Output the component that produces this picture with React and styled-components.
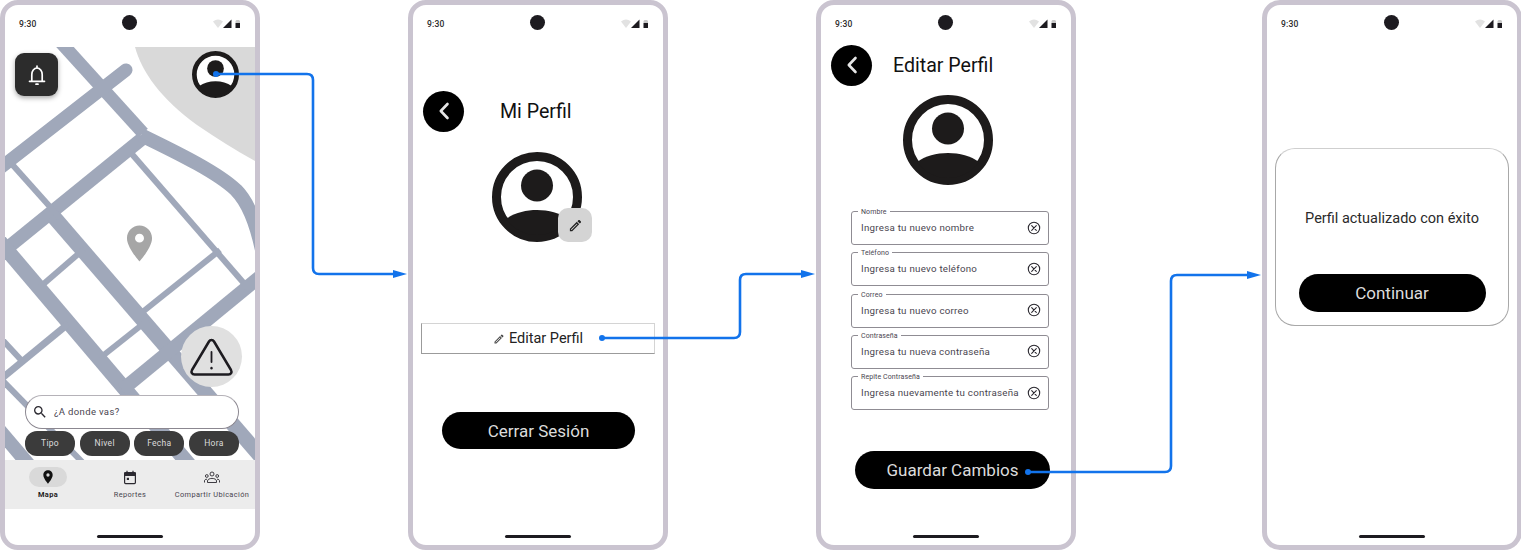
import React from 'react';
import styled, { createGlobalStyle } from 'styled-components';

const GlobalStyle = createGlobalStyle`
  html, body {
    margin: 0;
    padding: 0;
    background: #fff;
    font-family: Roboto, "Liberation Sans", sans-serif;
  }
`;

const Canvas = styled.div`
  position: relative;
  display: flex;
  width: 1521px;
  height: 550px;
  overflow: hidden;
  background: #fff;
`;

const Phone = styled.div`
  box-sizing: border-box;
  display: flex;
  flex-direction: column;
  flex: none;
  width: 260px;
  height: 550px;
  margin-left: ${(p) => p.$gap || 0}px;
  border: 5px solid #cac4d0;
  border-radius: 18px;
  overflow: hidden;
  background: #fff;
`;

const StatusBar = styled.div`
  position: relative;
  display: flex;
  flex: none;
  align-items: center;
  justify-content: space-between;
  height: 36px;
  padding: 2px 14px 0;
  box-sizing: border-box;
  font-size: 8.5px;
  font-weight: 500;
  letter-spacing: 0.2px;
  color: #2a2a2a;
`;

const Camera = styled.div`
  position: absolute;
  left: 117px;
  top: 10px;
  width: 15px;
  height: 15px;
  border-radius: 50%;
  background: #1d1b20;
`;

const HomeBar = styled.div`
  flex: none;
  width: 66px;
  height: 3px;
  margin: auto auto 7px;
  border-radius: 2px;
  background: #1d1b20;
`;

/* map screen */
const MapArea = styled.div`
  position: relative;
  flex: none;
  height: 413px;
  margin-top: 6px;
  overflow: hidden;
`;

const MapDrawing = styled.svg`
  display: block;
  width: 250px;
  height: 413px;
`;

const BellButton = styled.div`
  position: absolute;
  left: 10px;
  top: 6px;
  display: flex;
  align-items: center;
  justify-content: center;
  width: 43px;
  height: 43px;
  border-radius: 9px;
  background: #2c2c2c;
  box-shadow: 0 2px 5px rgba(0, 0, 0, 0.35);
`;

const MapAvatar = styled.div`
  position: absolute;
  left: 187px;
  top: 4px;
  line-height: 0;
`;

const AlertButton = styled.div`
  position: absolute;
  left: 176px;
  top: 279px;
  display: flex;
  align-items: center;
  justify-content: center;
  width: 61px;
  height: 61px;
  border-radius: 50%;
  background: #e0e0e0;
`;

const MapControls = styled.div`
  position: absolute;
  left: 20px;
  top: 348px;
  display: flex;
  flex-direction: column;
  gap: 2.5px;
  width: 214px;
`;

const SearchBar = styled.div`
  box-sizing: border-box;
  display: flex;
  align-items: center;
  gap: 6px;
  height: 33.5px;
  padding-left: 6px;
  border: 1px solid #8b8790;
  border-top-color: #b5b2b8;
  border-radius: 17px;
  background: #fff;
  font-size: 9.5px;
  letter-spacing: 0.35px;
  color: #49454f;
`;

const ChipRow = styled.div`
  display: flex;
  justify-content: space-between;
`;

const Chip = styled.div`
  display: flex;
  align-items: center;
  justify-content: center;
  width: 50px;
  height: 24.5px;
  border-radius: 12px;
  background: #3b3b3b;
  font-size: 8.5px;
  letter-spacing: 0.3px;
  color: #dcdcdc;
`;

const NavBar = styled.div`
  display: grid;
  flex: none;
  grid-template-columns: repeat(3, 82px);
  justify-content: center;
  height: 49px;
  background: #ececec;
`;

const NavItem = styled.div`
  display: flex;
  flex-direction: column;
  align-items: center;
  padding-top: 7px;
  font-size: 7.4px;
  font-weight: ${(p) => (p.$active ? 700 : 400)};
  letter-spacing: 0.36px;
  white-space: nowrap;
  color: ${(p) => (p.$active ? '#1d1b20' : '#49454f')};
`;

const NavIcon = styled.div`
  display: flex;
  align-items: center;
  justify-content: center;
  width: 38.5px;
  height: 20px;
  margin-bottom: 3px;
  border-radius: 10px;
  background: ${(p) => (p.$active ? '#d9d9d9' : 'transparent')};
`;

/* profile screens */
const Header = styled.div`
  display: flex;
  flex: none;
  align-items: center;
  gap: ${(p) => p.$gap}px;
  margin: ${(p) => p.$top}px 0 0 10px;
`;

const HeaderTitle = styled.span`
  padding-top: 2px;
  font-size: 19.6px;
  line-height: 40px;
  color: #111;
`;

const BackButton = styled.div`
  display: flex;
  align-items: center;
  justify-content: center;
  width: 41px;
  height: 41px;
  border-radius: 50%;
  background: #000;
`;

const AvatarWrap = styled.div`
  position: relative;
  flex: none;
  width: 90px;
  height: 90px;
  margin: ${(p) => p.$top}px 0 0 ${(p) => p.$left}px;
`;

const EditBadge = styled.div`
  position: absolute;
  left: 66px;
  top: 56px;
  display: flex;
  align-items: center;
  justify-content: center;
  width: 34px;
  height: 34px;
  border-radius: 10px;
  background: #d4d4d4;
`;

const EditRow = styled.div`
  box-sizing: border-box;
  display: flex;
  flex: none;
  align-items: center;
  justify-content: center;
  gap: 4px;
  width: 234px;
  height: 31px;
  margin: 81px 0 0 8px;
  border: 1px solid #9b9b9b;
  border-top-color: #d4d4d4;
  border-right-color: #d4d4d4;
  font-size: 14.5px;
  color: #222;
`;

const PillButton = styled.div`
  display: flex;
  flex: none;
  align-items: center;
  justify-content: center;
  width: ${(p) => p.$width}px;
  height: ${(p) => p.$height}px;
  margin: ${(p) => p.$margin};
  border-radius: 19px;
  background: #000;
  font-size: 17px;
  color: #dcdcdc;
`;

const FieldList = styled.div`
  display: flex;
  flex: none;
  flex-direction: column;
  gap: 7.25px;
  width: 197.5px;
  margin: 26px 0 0 30px;
`;

const Field = styled.div`
  position: relative;
  box-sizing: border-box;
  display: flex;
  align-items: center;
  justify-content: space-between;
  height: 34px;
  padding: 0 6.5px 1px 9px;
  border: 1px solid #8f8c93;
  border-radius: 3px;
  font-size: 9.75px;
  letter-spacing: 0.25px;
  white-space: nowrap;
  color: #49454f;
`;

const FieldLabel = styled.span`
  position: absolute;
  left: 6px;
  top: -4px;
  padding: 0 3px;
  background: #fff;
  font-size: 7px;
  line-height: 8px;
  letter-spacing: 0.1px;
  color: #49454f;
`;

const MessageCard = styled.div`
  box-sizing: border-box;
  display: flex;
  flex: none;
  flex-direction: column;
  align-items: center;
  width: 234px;
  height: 178px;
  margin: 107px 0 0 8px;
  padding: 60px 0 13px;
  border: 1px solid #a8a8a8;
  border-top-color: #cfcfcf;
  border-radius: 20px;
  font-size: 14.5px;
  line-height: 20px;
  color: #2a2a2a;
`;

const Connectors = styled.svg`
  position: absolute;
  left: 0;
  top: 0;
  width: 1521px;
  height: 550px;
  pointer-events: none;
`;

const ROADS = [
  // wide streets
  { d: 'M55 36L143 133', w: 13 },
  { d: 'M126 70L-5 172', w: 13, cap: 'round' },
  { d: 'M143 138L-5 258', w: 13.5 },
  { d: 'M-5 236L197 474', w: 15 },
  { d: 'M53 216L262 458', w: 15 },
  { d: 'M262 275L122 390', w: 13.5 },
  { d: 'M141 135C165 147 215 170 236 190C248 202 256 222 262 250', w: 14 },
  { d: 'M-5 425L40 478', w: 14 },
  // narrow streets
  { d: 'M10 162L60 218', w: 6 },
  { d: 'M131 153L248 288', w: 6 },
  { d: 'M84 249L40 287', w: 6 },
  { d: 'M148 320L100 358', w: 6 },
  { d: 'M68 324L-5 384', w: 7 },
  { d: 'M220 250L140 314', w: 6 },
  { d: 'M-2 335L22 361', w: 6 },
  { d: 'M0 378L90 470', w: 6 },
];

const StatusIcons = () => (
  <svg width="28" height="10" viewBox="0 0 28 10">
    <path d="M0 2.500Q5-1.500 10 2.500L5 9Z" fill="#e2e2e2" />
    <path d="M10 9L18.500 0.500V9Z" fill="#1d1b20" />
    <path d="M23.500 1H26L27 2V4H22.500V2Z" fill="#c9c9c9" />
    <path d="M22.500 4H27V9H22.500Z" fill="#1d1b20" />
  </svg>
);

const Status = () => (
  <StatusBar>
    9:30
    <Camera />
    <StatusIcons />
  </StatusBar>
);

const Avatar = ({ size = 90 }) => (
  <svg width={size} height={size} viewBox="0 0 90 90">
    <circle cx="45" cy="45" r="40.500" fill="#fff" stroke="#1d1b1b" strokeWidth="9" />
    <circle cx="45" cy="33.500" r="16" fill="#1d1b1b" />
    <path d="M14 67C30 55 60 55 76 67A38 38 0 0 1 14 67Z" fill="#1d1b1b" />
  </svg>
);

const Chevron = () => (
  <svg width="12" height="18" viewBox="0 0 12 18">
    <path d="M9.500 2L2.800 9L9.500 16" fill="none" stroke="#e6e6e6" strokeWidth="2.600" strokeLinecap="round" strokeLinejoin="round" />
  </svg>
);

const Pencil = ({ size, color = '#222' }) => (
  <svg width={size} height={size} viewBox="0 0 24 24" fill={color}>
    <path d="M3 17.250V21h3.750L17.810 9.940l-3.750-3.750L3 17.250zM5.920 19H5v-.92l9.060-9.060.92.92L5.920 19zM20.710 5.630l-2.340-2.340c-.2-.2-.45-.29-.71-.29s-.51.1-.7.29l-1.830 1.830 3.750 3.750 1.830-1.830a.996.996 0 0 0 0-1.410z" />
  </svg>
);

const ClearIcon = () => (
  <svg width="14" height="14" viewBox="0 0 14 14" fill="none" stroke="#2b2930" strokeWidth="1.100" strokeLinecap="round">
    <circle cx="7" cy="7" r="5.700" />
    <path d="M4.700 4.700L9.300 9.300M9.300 4.700L4.700 9.300" />
  </svg>
);

const PIN = 'M12 2C8.130 2 5 5.130 5 9c0 5.250 7 13 7 13s7-7.750 7-13c0-3.870-3.130-7-7-7zm0 9.500a2.500 2.500 0 0 1 0-5 2.500 2.500 0 0 1 0 5z';

const MapScreen = () => (
  <>
    <Status />
    <MapArea>
      <MapDrawing viewBox="5 47 250 413">
        <path d="M135 47C142 72 160 98 197 125C215 137 235 150 255 161V47Z" fill="#d9d9d9" />
        {ROADS.map((road) => (
          <path key={road.d} d={road.d} fill="none" stroke="#a0a8ba" strokeWidth={road.w} strokeLinecap={road.cap || 'butt'} />
        ))}
        <svg x="118" y="222" width="43" height="43" viewBox="0 0 24 24">
          <path d={PIN} fill="#a6a6a6" />
        </svg>
      </MapDrawing>
      <BellButton>
        <svg width="22" height="22" viewBox="0 0 22 22" fill="none" stroke="#fff" strokeWidth="1.700" strokeLinecap="round" strokeLinejoin="round">
          <path d="M3.500 17.300H18.500M5.800 17.300V10.500C5.800 7 8 4 11 4C14 4 16.200 7 16.200 10.500V17.300" />
          <path d="M11 2V3.500M10 20.200H12" />
        </svg>
      </BellButton>
      <MapAvatar>
        <Avatar size={47} />
      </MapAvatar>
      <AlertButton>
        <svg width="45" height="40" viewBox="0 0 45 40" fill="none" stroke="#1d1b20" strokeLinecap="round" strokeLinejoin="round">
          <path d="M20 4.500C21.200 2.500 23.800 2.500 25 4.500L42 33C43.200 35.200 42 37.500 39.500 37.500H5.500C3 37.500 1.800 35.200 3 33Z" strokeWidth="2.500" />
          <path d="M22.500 15V25" strokeWidth="1.800" />
          <path d="M22.500 31V31.200" strokeWidth="2.400" />
        </svg>
      </AlertButton>
      <MapControls>
        <SearchBar>
          <svg width="16" height="16" viewBox="0 0 24 24" fill="#2b2930">
            <path d="M15.500 14h-.79l-.28-.27A6.470 6.470 0 0 0 16 9.500 6.500 6.500 0 1 0 9.500 16c1.610 0 3.090-.59 4.230-1.570l.27.28v.79l5 4.990L20.490 19l-4.990-5zm-6 0C7.010 14 5 11.990 5 9.500S7.010 5 9.500 5 14 7.010 14 9.500 11.990 14 9.500 14z" />
          </svg>
          ¿A donde vas?
        </SearchBar>
        <ChipRow>
          <Chip>Tipo</Chip>
          <Chip>Nivel</Chip>
          <Chip>Fecha</Chip>
          <Chip>Hora</Chip>
        </ChipRow>
      </MapControls>
    </MapArea>
    <NavBar>
      <NavItem $active>
        <NavIcon $active>
          <svg width="16" height="16" viewBox="0 0 24 24">
            <path d={PIN} fill="#111" />
          </svg>
        </NavIcon>
        Mapa
      </NavItem>
      <NavItem>
        <NavIcon>
          <svg width="14" height="15" viewBox="0 0 14 15" fill="none" stroke="#2b2930" strokeWidth="1.200">
            <rect x="1.600" y="2.600" width="10.800" height="11" rx="1" />
            <path d="M1.600 3H12.400V5.500H1.600Z" fill="#2b2930" />
            <path d="M4 0.800V3M10 0.800V3" />
            <rect x="3.800" y="7.800" width="2.200" height="2.200" fill="#2b2930" stroke="none" />
          </svg>
        </NavIcon>
        Reportes
      </NavItem>
      <NavItem>
        <NavIcon>
          <svg width="16" height="13" viewBox="0 0 16 13" fill="none" stroke="#2b2930" strokeWidth="0.900">
            <circle cx="8" cy="3" r="2" />
            <circle cx="2.800" cy="5" r="1.400" />
            <circle cx="13.200" cy="5" r="1.400" />
            <path d="M0.500 11.500V9.800C0.500 8.800 1.500 8.200 3 8.200M15.500 11.500V9.800C15.500 8.800 14.500 8.200 13 8.200" />
            <path d="M3.500 11.500V10C3.500 8.500 5.500 7.400 8 7.400C10.500 7.400 12.500 8.500 12.500 10V11.500H3.500Z" />
          </svg>
        </NavIcon>
        Compartir Ubicación
      </NavItem>
    </NavBar>
    <HomeBar />
  </>
);

const ProfileScreen = () => (
  <>
    <Status />
    <Header $top={49} $gap={36}>
      <BackButton>
        <Chevron />
      </BackButton>
      <HeaderTitle>Mi Perfil</HeaderTitle>
    </Header>
    <AvatarWrap $top={20} $left={79}>
      <Avatar />
      <EditBadge>
        <Pencil size={15} />
      </EditBadge>
    </AvatarWrap>
    <EditRow>
      <Pencil size={12} color="#444" />
      Editar Perfil
    </EditRow>
    <PillButton $width={193} $height={37} $margin="58px 0 0 29px">Cerrar Sesión</PillButton>
    <HomeBar />
  </>
);

const FIELDS = [
  ['Nombre', 'Ingresa tu nuevo nombre'],
  ['Teléfono', 'Ingresa tu nuevo teléfono'],
  ['Correo', 'Ingresa tu nuevo correo'],
  ['Contraseña', 'Ingresa tu nueva contraseña'],
  ['Repite Contraseña', 'Ingresa nuevamente tu contraseña'],
];

const EditScreen = () => (
  <>
    <Status />
    <Header $top={3} $gap={21}>
      <BackButton>
        <Chevron />
      </BackButton>
      <HeaderTitle>Editar Perfil</HeaderTitle>
    </Header>
    <AvatarWrap $top={9} $left={82}>
      <Avatar />
    </AvatarWrap>
    <FieldList>
      {FIELDS.map(([label, hint]) => (
        <Field key={label}>
          <FieldLabel>{label}</FieldLabel>
          {hint}
          <ClearIcon />
        </Field>
      ))}
    </FieldList>
    <PillButton $width={195} $height={38} $margin="41px 0 0 34px">Guardar Cambios</PillButton>
    <HomeBar />
  </>
);

const DoneScreen = () => (
  <>
    <Status />
    <MessageCard>
      Perfil actualizado con éxito
      <PillButton $width={187} $height={38} $margin="auto 0 0">Continuar</PillButton>
    </MessageCard>
    <HomeBar />
  </>
);

const LINKS = [
  { line: 'M216 74H307Q313 74 313 80V268Q313 274 319 274H396', tip: '393,270 407,274 393,278', dot: [216, 74] },
  { line: 'M602 338H734Q740 338 740 332V280Q740 274 746 274H804', tip: '801,270 815,274 801,278', dot: [602, 338] },
  { line: 'M1028 472H1165Q1171 472 1171 466V281Q1171 275 1177 275H1250', tip: '1247,271 1261,275 1247,279', dot: [1028, 472] },
];

const App = () => (
  <Canvas>
    <GlobalStyle />
    <Phone><MapScreen /></Phone>
    <Phone $gap={148}><ProfileScreen /></Phone>
    <Phone $gap={148}><EditScreen /></Phone>
    <Phone $gap={186}><DoneScreen /></Phone>
    <Connectors viewBox="0 0 1521 550">
      {LINKS.map((link) => (
        <g key={link.tip}>
          <path d={link.line} fill="none" stroke="#1273eb" strokeWidth="2.600" />
          <polygon points={link.tip} fill="#1273eb" />
          <circle cx={link.dot[0]} cy={link.dot[1]} r="3" fill="#1273eb" />
        </g>
      ))}
    </Connectors>
  </Canvas>
);

export default App;
